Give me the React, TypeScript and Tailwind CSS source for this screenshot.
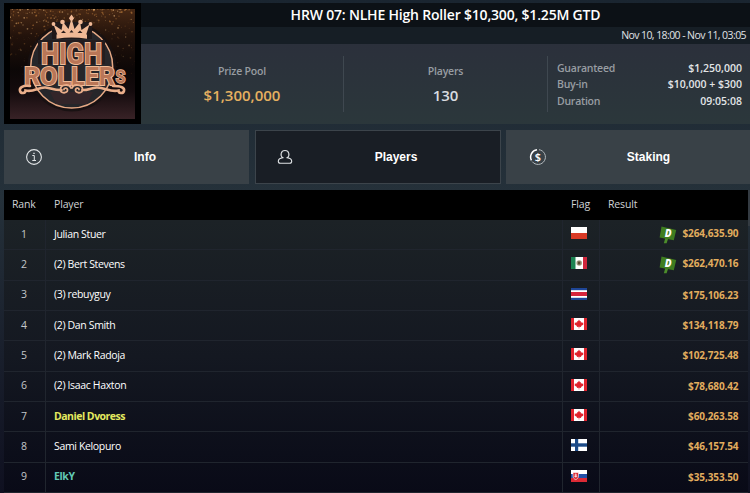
import React from "react";

type FlagCode = "pl" | "mx" | "cr" | "ca" | "fi" | "sk";

type Row = {
  name: string;
  flag: FlagCode;
  result: string;
  deal?: boolean;
  tone?: string;
};

const rows: Row[] = [
  { name: "Julian Stuer", flag: "pl", result: "$264,635.90", deal: true },
  { name: "(2) Bert Stevens", flag: "mx", result: "$262,470.16", deal: true },
  { name: "(3) rebuyguy", flag: "cr", result: "$175,106.23" },
  { name: "(2) Dan Smith", flag: "ca", result: "$134,118.79" },
  { name: "(2) Mark Radoja", flag: "ca", result: "$102,725.48" },
  { name: "(2) Isaac Haxton", flag: "ca", result: "$78,680.42" },
  { name: "Daniel Dvoress", flag: "ca", result: "$60,263.58", tone: "font-bold tracking-[-0.5px] text-[#e3e95f]" },
  { name: "Sami Kelopuro", flag: "fi", result: "$46,157.54" },
  { name: "ElkY", flag: "sk", result: "$35,353.50", tone: "font-bold tracking-[-0.4px] text-[#62c9b5]" },
];

function Flag({ code }: { code: FlagCode }) {
  return (
    <svg width="16" height="12" viewBox="0 0 16 12" className="block">
      {code === "pl" && (
        <>
          <rect width="16" height="12" fill="#fff" />
          <rect y="6" width="16" height="6" fill="#d93a26" />
        </>
      )}
      {code === "mx" && (
        <>
          <rect width="16" height="12" fill="#fff" />
          <rect width="4.500" height="12" fill="#1d8352" />
          <rect x="12" width="4" height="12" fill="#d0263c" />
          <circle cx="8.200" cy="6" r="2.800" fill="#a39f84" />
          <path d="M6.800 4.500h2.600v3H6.800z" fill="#5b4a33" />
        </>
      )}
      {code === "cr" && (
        <>
          <rect width="16" height="12" fill="#fff" />
          <rect width="16" height="2.200" fill="#1e4596" />
          <rect y="9.800" width="16" height="2.200" fill="#1e4596" />
          <rect y="4" width="16" height="4" fill="#d6243c" />
        </>
      )}
      {code === "ca" && (
        <>
          <rect width="16" height="12" fill="#fff" />
          <rect width="3" height="12" fill="#e0242e" />
          <rect x="13" width="3" height="12" fill="#e0242e" />
          <path
            d="M8 1.600l1.100 1.800.9-.4-.1 1.900 1-.9.4.7h1.200l-.4 1.200.4.500-2.500 1.600.2.900-1.900-.2v1.700h-.6V8.700l-1.900.2.2-.9L3.500 6.400l.4-.5-.4-1.200h1.200l.4-.7 1 .9L6 3l.9.4z"
            fill="#e0242e"
          />
        </>
      )}
      {code === "fi" && (
        <>
          <rect width="16" height="12" fill="#fff" />
          <rect x="4" width="3.200" height="12" fill="#1c4a87" />
          <rect y="4.300" width="16" height="3.400" fill="#1c4a87" />
        </>
      )}
      {code === "sk" && (
        <>
          <rect width="16" height="12" fill="#fff" />
          <rect y="4" width="16" height="4" fill="#2350a8" />
          <rect y="8" width="16" height="4" fill="#dc2a35" />
          <path d="M2 2.500h5.500v3.500c0 2-1.200 3-2.750 3.600C3.200 9 2 8 2 6z" fill="#dc2a35" stroke="#fff" strokeWidth=".6" />
          <path d="M4.750 3.500v4M3.500 5h2.500M3.300 6.400h2.900" stroke="#fff" strokeWidth=".7" />
        </>
      )}
    </svg>
  );
}

function DealBadge() {
  return (
    <svg width="18" height="18" viewBox="0 0 18 18" className="block">
      <path d="M6.500 11.500h3L7.600 17.200H4.800z" fill="#4c8d2b" />
      <path d="M2.500.6L17.200 4 14.800 14.200.6 11.400z" fill="#3f7d20" />
      <text
        x="9"
        y="11"
        textAnchor="middle"
        fill="#fff"
        className="font-['Open_Sans',sans-serif] text-[10px] font-extrabold italic"
      >
        D
      </text>
    </svg>
  );
}

// Deterministic glitter for the upper part of the logo tile.
const sparks = Array.from({ length: 480 }, (_, i) => {
  const a = Math.abs(Math.sin(i * 12.9898) * 43758.5453) % 1;
  const b = Math.abs(Math.sin(i * 78.233 + 4) * 12543.123) % 1;
  const c = Math.abs(Math.sin(i * 37.719 + 9) * 9631.77) % 1;
  const y = b * b * 66;
  return { x: a * 125, y, r: 0.3 + c * 0.6, o: (0.15 + c * 0.55) * (1 - y / 80) };
});

function Logo() {
  return (
    <svg width="125" height="110" viewBox="0 0 125 110" className="block">
      <defs>
        <linearGradient id="tile" x1="0" y1="0" x2="0" y2="1">
          <stop offset="0" stopColor="#472814" />
          <stop offset=".25" stopColor="#22120b" />
          <stop offset=".55" stopColor="#0c0707" />
          <stop offset=".75" stopColor="#140b0d" />
          <stop offset="1" stopColor="#382226" />
        </linearGradient>
      </defs>
      <rect width="125" height="110" fill="url(#tile)" />
      {sparks.map((s, i) => (
        <circle key={i} cx={s.x} cy={s.y} r={s.r} fill={i % 4 ? "#b27439" : "#e5b579"} opacity={s.o} />
      ))}
      <circle cx="61.700" cy="58" r="44.500" fill="#161112" opacity=".85" />
      <circle cx="61.700" cy="58" r="41" fill="#26262a" stroke="#e6a985" strokeWidth="1.500" />
      <path d="M40 83h43l-6 12H46z" fill="#332529" />
      <path d="M42 13h40v17H42z" fill="#21191a" />
      <g fill="#f0b996">
        <path d="M47.500 26L43.500 15.500l8 5.500 1.500-8 5.500 7L61.500 9.500 64.500 20l5.500-7 1.500 8 8-5.500L76 26z" />
        <path d="M46.500 25.500q15.500-3 30.500 0v4.300q-15.500-2.600-30.500 0z" />
        <path d="M61.500 5.500l2.600 3.700-2.600 3.700-2.600-3.700z" />
        <circle cx="52.500" cy="13" r="2.300" />
        <circle cx="70.500" cy="13" r="2.300" />
        <circle cx="43.500" cy="15" r="1.900" />
        <circle cx="80.500" cy="15" r="1.900" />
      </g>
      <path d="M51 24l2.500-2.500L56 24M59.500 23.500l2-2.500 2 2.500M67.500 24l2.500-2.500L72.500 24" fill="#2a1c1a" />
      <path d="M28 31h67v24H28z" fill="#231d1f" />
      <g
        fill="#b97657"
        stroke="#efbb97"
        strokeWidth="2"
        paintOrder="stroke"
        className="font-['Roboto',sans-serif] font-bold"
      >
        <text x="31" y="54.500" fontSize="29" textLength="61" lengthAdjust="spacingAndGlyphs">
          HIGH
        </text>
        <text x="14" y="76" fontSize="26.500" textLength="91" lengthAdjust="spacingAndGlyphs">
          ROLLER
        </text>
        <text x="105.500" y="73.500" fontSize="19" strokeWidth="1.500" textLength="10" lengthAdjust="spacingAndGlyphs">
          S
        </text>
      </g>
      <g fill="none" stroke="#eaae8a" strokeLinecap="round">
        <path d="M20 77c-7-1-11 1.500-10 5 1 3 5.500 2.500 5.500-.5 9 2 12-3.500 20-3 6 .5 9 3 16 2.500" strokeWidth="2.600" />
        <path d="M103 77c8 0 12 1.500 11 5-1 3-5.500 2.500-5.500-.5-9 2-14-3.500-22-3-6 .5-9 3-14 2.500" strokeWidth="2.600" />
        <path d="M54 80.500c0-2 3.500-2 3.500.7 0 3.300-7 3.800-7-1 0-5 9-5.700 10.500-1.200" strokeWidth="1.800" />
        <path d="M69 80.500c0-2-3.500-2-3.500.7 0 3.300 7 3.800 7-1 0-5-9-5.700-10.500-1.200" strokeWidth="1.800" />
      </g>
    </svg>
  );
}

function InfoIcon() {
  return (
    <svg width="18" height="18" viewBox="0 0 18 18" fill="none" stroke="#e3e6e8">
      <circle cx="9" cy="9" r="7.400" strokeWidth="1.100" />
      <path d="M7.300 7.500h2v5M7.300 12.500h3.700" strokeWidth="1" />
      <path d="M8.300 5.400h1.400" strokeWidth="1.200" />
    </svg>
  );
}

function PersonIcon() {
  return (
    <svg width="18" height="18" viewBox="0 0 18 18" fill="none" stroke="#dfe2e5" strokeWidth="1.100">
      <path d="M6.800 9.700C3.800 7.500 4.800 2.500 9 2.500s5.200 5 2.200 7.200c2.800.4 4.500 1.600 4.500 3.500 0 1.500-.8 2-2 2H4.300c-1.200 0-2-.5-2-2 0-1.900 1.700-3.100 4.500-3.500z" />
    </svg>
  );
}

function StakeIcon() {
  return (
    <svg width="18" height="18" viewBox="0 0 18 18" fill="none">
      <path d="M10 1.700A7.400 7.400 0 1 1 3.200 13.600" stroke="#b3b9bd" strokeWidth="1" />
      <path d="M2.400 12.300A7.400 7.400 0 0 1 8 1.700" stroke="#fff" strokeWidth="1.500" />
      <text
        x="9"
        y="13"
        textAnchor="middle"
        fill="#fff"
        className="font-['Open_Sans',sans-serif] text-[11px] font-semibold"
      >
        $
      </text>
    </svg>
  );
}

const tabs = [
  { label: "Info", icon: <InfoIcon />, box: "w-[245px] bg-[#394147] pl-[21px] pr-[2px]" },
  { label: "Players", icon: <PersonIcon />, box: "w-[246px] border border-[#3c444b] bg-[#191e25] pl-[20px] pr-[1px]" },
  { label: "Staking", icon: <StakeIcon />, box: "w-[244px] bg-[#394147] pl-[23px]" },
];

export default function App() {
  return (
    <div className="h-[493px] w-[750px] overflow-hidden bg-linear-to-b from-[#1a2530] via-[#25313a] via-40% to-[#0f1020] pl-[4px] pt-[3px] font-['Open_Sans',sans-serif] text-white">
      <header className="flex h-[121px]">
        <div className="flex w-[137px] shrink-0 bg-black pl-[6px] pt-[6px]">
          <Logo />
        </div>
        <div className="flex min-w-0 flex-1 flex-col">
          <h1 className="flex h-[24px] items-center justify-center bg-[#0c1116] text-[14px] font-semibold leading-none tracking-[-0.19px]">
            HRW 07: NLHE High Roller $10,300, $1.25M GTD
          </h1>
          <div className="flex h-[17px] items-center justify-end bg-[#161e25] pr-[4px] text-[10.500px] leading-none tracking-[-0.58px] text-[#e0e3e5]">
            Nov 10, 18:00 - Nov 11, 03:05
          </div>
          <div className="flex flex-1 items-center bg-linear-to-b from-[#2b303b] to-[#2b373b]">
            <div className="flex h-[56px] w-[203px] flex-col items-center border-r border-[#3f4850] pt-[7px]">
              <span className="text-[10.500px] font-semibold leading-[16px] tracking-[-0.2px] text-[#989da2]">Prize Pool</span>
              <span className="mt-[6px] text-[15px] font-semibold leading-[20px] text-[#e5b060]">$1,300,000</span>
            </div>
            <div className="flex h-[56px] w-[204px] flex-col items-center border-r border-[#3f4850] pt-[7px]">
              <span className="text-[10.500px] font-semibold leading-[16px] tracking-[-0.2px] text-[#989da2]">Players</span>
              <span className="mt-[6px] text-[15px] font-semibold leading-[20px] text-[#d8dce0]">130</span>
            </div>
            <dl className="flex flex-1 flex-col pl-[9px] pr-[8px] pt-[1px] leading-[16.500px]">
              {[
                ["Guaranteed", "$1,250,000"],
                ["Buy-in", "$10,000 + $300"],
                ["Duration", "09:05:08"],
              ].map(([k, v]) => (
                <div key={k} className="flex justify-between text-[10.500px] font-semibold">
                  <dt className="tracking-[-0.25px] text-[#989da2]">{k}</dt>
                  <dd className="text-[#e2e5e7]">{v}</dd>
                </div>
              ))}
            </dl>
          </div>
        </div>
      </header>

      <nav className="mt-[6px] flex h-[54px] gap-[5.500px]">
        {tabs.map((t) => (
          <button key={t.label} className={`flex shrink-0 items-center ${t.box}`}>
            {t.icon}
            <span className="flex-1 text-center font-['Liberation_Sans',sans-serif] text-[12px] font-bold">
              {t.label}
            </span>
          </button>
        ))}
      </nav>

      <div className="mt-[6px] flex">
        <div className="w-[744px] shrink-0">
          <div className="flex h-[30px] items-center bg-black text-[10.500px] tracking-[-0.15px] text-[#d0d3d6]">
            <span className="w-[41px] pl-[8px]">Rank</span>
            <span className="w-[517px] pl-[9px]">Player</span>
            <span className="w-[37px] pl-[9px]">Flag</span>
            <span className="pl-[9px]">Result</span>
          </div>
          <div className="bg-linear-to-b from-[#1c2226] via-[#141821] via-50% to-[#090a17] text-[10.500px]">
            {rows.map((r, i) => (
              <div key={r.name} className="flex h-[30.330px] border-b border-[#20252e]">
                <span className="flex w-[42px] items-center justify-center border-r border-[#20252e] pr-[1px] text-[#c3c7ca]">
                  {i + 1}
                </span>
                <span
                  className={`flex w-[516.500px] items-center border-r border-[#20252e] pl-[8px] ${r.tone ?? "font-medium tracking-[-0.35px]"}`}
                >
                  {r.name}
                </span>
                <span className="flex w-[37px] items-center border-r border-[#20252e] pb-[3px] pl-[8.500px]">
                  <Flag code={r.flag} />
                </span>
                <span className="flex flex-1 items-center justify-end gap-[5px] pr-[9.500px] text-[10px] font-bold tracking-[-0.1px] text-[#e2ad5e]">
                  {r.deal && <DealBadge />}
                  <span className={r.deal ? "pb-[3px]" : ""}>{r.result}</span>
                </span>
              </div>
            ))}
          </div>
        </div>
        <div className="h-[36px] flex-1 bg-[#343b42]" />
      </div>
    </div>
  );
}
